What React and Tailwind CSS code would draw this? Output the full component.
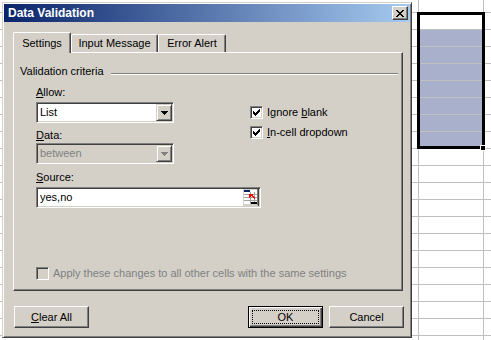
import React from "react";

function Pixels({ rows, color }) {
  const rects = [];
  rows.forEach((r, y) =>
    [...r].forEach((c, x) => {
      if (c === "#") rects.push(<rect key={`${x}-${y}`} x={x} y={y} width="1" height="1" />);
    })
  );
  return (
    <svg width={rows[0].length} height={rows.length} fill={color} shapeRendering="crispEdges">
      {rects}
    </svg>
  );
}

const ARROW = ["#######", ".#####.", "..###..", "...#..."];
const CHECK = ["......#", ".....##", "#...###", "##.###.", "#####..", ".###...", "..#...."];
const CLOSE = ["##....##", ".##..##.", "..####..", "...##...", "..####..", ".##..##.", "##....##"];

function Check({ checked, disabled }) {
  return (
    <span
      className={`flex h-[13px] w-[13px] shrink-0 items-center justify-center border border-t-[#808080] border-l-[#808080] border-r-white border-b-white shadow-[inset_1px_1px_#404040,inset_-1px_-1px_#d4d0c8] ${
        disabled ? "bg-[#d4d0c8]" : "bg-white"
      }`}
    >
      {checked && <Pixels rows={CHECK} color="#000" />}
    </span>
  );
}

function Select({ value, disabled }) {
  return (
    <div
      className={`flex h-[21px] w-[138px] border border-t-[#808080] border-l-[#808080] border-r-white border-b-white p-px shadow-[inset_1px_1px_#404040,inset_-1px_-1px_#d4d0c8] ${
        disabled ? "bg-[#d4d0c8]" : "bg-white"
      }`}
    >
      <span className={`flex-1 pl-[2px] leading-[17px] ${disabled ? "text-[#808080]" : ""}`}>{value}</span>
      <span className="flex w-[16px] items-center justify-center border border-t-[#d4d0c8] border-l-[#d4d0c8] border-r-[#404040] border-b-[#404040] bg-[#d4d0c8] shadow-[inset_1px_1px_#fff,inset_-1px_-1px_#808080]">
        <Pixels rows={ARROW} color={disabled ? "#808080" : "#000"} />
      </span>
    </div>
  );
}

function RefIcon() {
  return (
    <svg width="16" height="17" viewBox="0 0 16 17" shapeRendering="crispEdges">
      <rect x="0" y="0" width="16" height="17" fill="#d4d0c8" />
      <rect x="15" y="0" width="1" height="17" fill="#404040" />
      <rect x="14" y="0" width="1" height="16" fill="#808080" />
      <rect x="1" y="1" width="13" height="14" fill="#fff" />
      <path d="M1 5.5h13M1 8.5h13M1 11.5h13M7.5 3v12M11.5 3v12" stroke="#a0a0a0" strokeWidth="1" />
      <rect x="1" y="1" width="6" height="2" fill="#0a246a" />
      <polygon points="6,5 10,5 9,6 12,9 11,10 8,7 7,8 6,9" fill="#ff0000" />
      <rect x="8" y="13" width="6" height="2" fill="#000" />
    </svg>
  );
}

function Button({ children, primary }) {
  if (primary) {
    return (
      <div className="flex h-[22px] w-[75px] border border-black bg-[#d4d0c8] p-[3px] shadow-[inset_1px_1px_#fff,inset_-1px_-1px_#404040,inset_-2px_-2px_#808080]">
        <span className="flex flex-1 items-center justify-center border border-dotted border-black">{children}</span>
      </div>
    );
  }
  return (
    <div className="flex h-[22px] w-[75px] items-center justify-center border border-t-white border-l-white border-r-[#404040] border-b-[#404040] bg-[#d4d0c8] shadow-[inset_-1px_-1px_#808080]">
      {children}
    </div>
  );
}

const U = ({ children }) => <span className="underline underline-offset-[1px]">{children}</span>;

export default function App() {
  const rows = Array.from({ length: 21 }, (_, i) => i);
  return (
    <div className="relative h-[340px] w-[491px] overflow-hidden bg-white font-['Liberation_Sans',Arial,sans-serif] text-[11px] leading-[13px] text-black">
      {/* sheet behind */}
      <div className="flex flex-col">
        {rows.map((i) => (
          <div key={i} className={`flex shrink-0 border-b border-[#c0c0c0] ${i === 0 ? "h-[13px]" : "h-[17px]"}`}>
            <div className="w-[419px] shrink-0 border-r border-[#c0c0c0]" />
            <div className={`w-[65px] shrink-0 border-r border-[#c0c0c0] ${i >= 2 && i <= 8 ? "bg-[#a9b0cb]" : ""}`} />
            <div className="flex-1" />
          </div>
        ))}
      </div>

      {/* selection */}
      <div className="absolute left-[417px] top-[12px] h-[137px] w-[68px] border-[3px] border-black" />
      <div className="absolute left-[480px] top-[145px] h-[6px] w-[6px] border border-white bg-black" />

      {/* dialog */}
      <div className="absolute left-[2px] top-[2px] flex h-[336px] w-[410px] flex-col border border-t-[#d4d0c8] border-l-[#d4d0c8] border-r-[#404040] border-b-[#404040] bg-[#d4d0c8] p-px shadow-[inset_1px_1px_#fff,inset_-1px_-1px_#808080]">
        <div className="flex h-[18px] items-center justify-between bg-[linear-gradient(to_right,#0a246a,#a6caf0)] pl-[4px] pr-[2px]">
          <span className="text-[12px] font-bold text-white">Data Validation</span>
          <span className="flex h-[14px] w-[16px] items-center justify-center border border-t-white border-l-white border-r-[#404040] border-b-[#404040] bg-[#d4d0c8] shadow-[inset_-1px_-1px_#808080]">
            <Pixels rows={CLOSE} color="#000" />
          </span>
        </div>

        {/* tabs */}
        <div className="mt-[10px] flex h-[20px] items-end pl-[9px]">
          <div className="relative z-10 -mb-px flex h-[21px] w-[58px] justify-center rounded-tl-[2px] rounded-tr-[2px] border border-b-0 border-t-white border-l-white border-r-[#404040] bg-[#d4d0c8] pt-[4px] shadow-[inset_-1px_0_#808080]">
            Settings
          </div>
          <div className="flex h-[18px] w-[87px] justify-center rounded-tl-[2px] rounded-tr-[2px] border border-b-0 border-t-white border-l-white border-r-[#404040] pt-[2px] shadow-[inset_-1px_0_#808080]">
            Input Message
          </div>
          <div className="flex h-[18px] w-[68px] justify-center rounded-tl-[2px] rounded-tr-[2px] border border-b-0 border-t-white border-l-white border-r-[#404040] pt-[2px] shadow-[inset_-1px_0_#808080]">
            Error Alert
          </div>
        </div>

        {/* panel */}
        <div className="ml-[9px] flex h-[239px] w-[390px] flex-col border border-t-white border-l-white border-r-[#404040] border-b-[#404040] shadow-[inset_-1px_-1px_#808080]">
          <div className="ml-[6px] mr-[4px] mt-[12px] flex items-start gap-[7px]">
            <span>Validation criteria</span>
            <span className="mt-[8px] h-[2px] flex-1 border-t border-b border-t-[#808080] border-b-white" />
          </div>

          <div className="ml-[22px] flex flex-col">
            <div className="flex">
              <div className="flex w-[138px] flex-col">
                <span className="mt-[8px]">
                  <U>A</U>llow:
                </span>
                <div className="mt-[3px]">
                  <Select value="List" />
                </div>
                <span className="mt-[6px]">
                  <U>D</U>ata:
                </span>
                <div className="mt-px">
                  <Select value="between" disabled />
                </div>
              </div>
              <div className="ml-[76px] mt-[28px] flex flex-col gap-[7px]">
                <div className="flex items-center gap-[4px]">
                  <Check checked />
                  <span>
                    Ignore <U>b</U>lank
                  </span>
                </div>
                <div className="flex items-center gap-[4px]">
                  <Check checked />
                  <span>
                    <U>I</U>n-cell dropdown
                  </span>
                </div>
              </div>
            </div>
            <span className="mt-[7px]">
              <U>S</U>ource:
            </span>
            <div className="mt-[3px] flex h-[21px] w-[225px] border border-t-[#808080] border-l-[#808080] border-r-white border-b-white bg-white p-px shadow-[inset_1px_1px_#404040,inset_-1px_-1px_#d4d0c8]">
              <span className="flex-1 pl-[2px] leading-[17px]">yes,no</span>
              <RefIcon />
            </div>
            <div className="mt-[59px] flex items-center gap-[4px]">
              <Check disabled />
              <span className="text-[#808080]">Apply these changes to all other cells with the same settings</span>
            </div>
          </div>
        </div>

        {/* buttons */}
        <div className="mt-[15px] flex items-start pl-[10px] pr-[6px]">
          <Button>
            <span>
              <U>C</U>lear All
            </span>
          </Button>
          <div className="ml-auto flex gap-[6px]">
            <Button primary>OK</Button>
            <Button>Cancel</Button>
          </div>
        </div>
      </div>
    </div>
  );
}
